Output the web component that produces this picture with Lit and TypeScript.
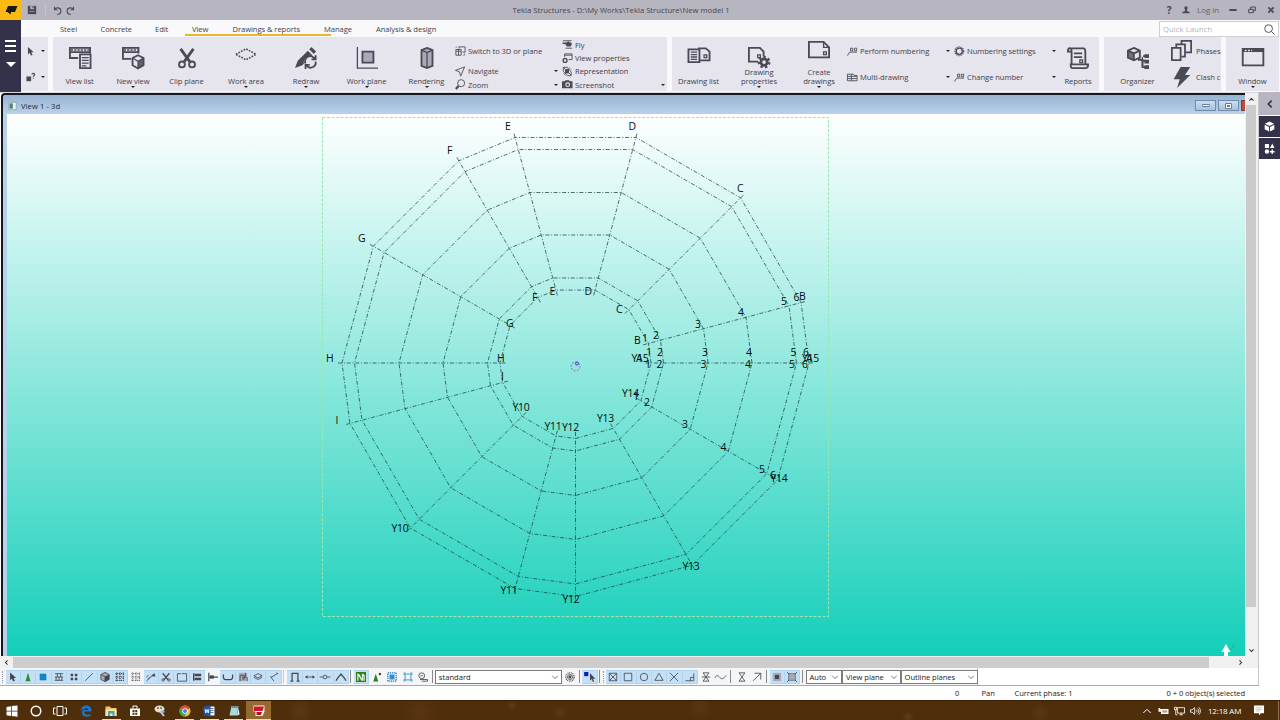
import { LitElement, html, svg, css, nothing } from "lit";
import { customElement, property } from "lit/decorators.js";
import { classMap } from "lit/directives/class-map.js";

// All glyphs share a 24x24 box. Strokes use currentColor.
const ICONS: Record<string, unknown> = {
  save: svg`<path class="f" d="M2 2h20v20H2z"/><path class="bg" d="M8 2h9v8H8z"/><path class="f" d="M13 3h3v5h-3z"/><path class="bg" d="M6 15h12v1.500H6z"/>`,
  undo: svg`<path class="s3" d="M4 2v8h8M4 9c4-6 17-6 17 4 0 6-4 9-10 9"/>`,
  redo: svg`<path class="s3" d="M20 2v8h-8M20 9C16 3 3 3 3 13c0 6 4 9 10 9"/>`,
  cursor: svg`<path class="f" d="M5 1v19l4.500-4 3 7 4-1.800-3-6.700h6z"/>`,
  query: svg`<path class="f" d="M1 10h12v12H1z"/><path class="s3" d="M15 5c0-4 7-4 7 0 0 3-3.500 2.500-3.500 6M18.500 13v2"/>`,
  viewList: svg`<path class="s2" d="M10 12H1V1h22v6M1 5.500h22"/><path class="s2 hdr" d="M2 3.200h20"/><path class="s2 fb" d="M12 8h11.500v15H12z"/><path class="s1" d="M14 11.500h7.500M14 14.500h7.500M14 17.500h7.500M14 20.500h5"/>`,
  newView: svg`<path class="s2" d="M10 13H1V1h17v6M1 5.500h17"/><path class="s2 hdr" d="M2 3.200h15"/><path class="s2 fb" d="M17.500 9l6 3v8l-6 3.500-6-3.500v-8z"/><path class="f" d="M17.500 15.500v8l6-3.500v-8z" opacity=".85"/><path class="s1" d="M11.500 12l6 3.500 6-3.500M17.500 15.500v8"/>`,
  clip: svg`<path class="s3" d="M5 2l10 14M19 2L9 16"/><circle class="s2" cx="6.500" cy="19" r="3.200"/><circle class="s2" cx="17.500" cy="19" r="3.200"/>`,
  workArea: svg`<path class="s1 dash" d="M1 8L12 2l11 6-11 6z"/>`,
  redraw: svg`<path class="f" d="M0 23l3-8L14 4l5 5L8 20z"/><path class="f" d="M15.500 2.500L18 0l5 5-2.500 2.500z"/><circle class="fb" cx="17" cy="17" r="7.500"/><path class="s2" d="M11.500 18a5.500 5.500 0 0 1 10-5M22.500 16a5.500 5.500 0 0 1-10 4M22.500 9v4.500H18M11.500 24v-4.500H16"/>`,
  workPlane: svg`<path class="s1" d="M1.500 0v23H24"/><path class="s2 mid" d="M7 5h12v12H7z"/>`,
  rendering: svg`<path class="s2 mid" d="M12 1l6 2.500v17L12 23l-6-2.500v-17z"/><path class="s1" d="M6 3.500L12 6l6-2.500M12 6v17"/>`,
  switch3d: svg`<path class="s2" d="M2 8h12v13H2zM2 12h12M8 8v13M9 6V2h14v12h-6"/><path class="s1" d="M1 5l4-4M18 21h4v-4"/>`,
  navigate: svg`<path class="s2" d="M22 2L1 10l9 3 3 10z"/>`,
  zoom: svg`<circle class="s2" cx="14" cy="9.500" r="8"/><path class="s4" d="M8 16l-6 7"/>`,
  fly: svg`<path class="s2" d="M2 4h20"/><path class="f" d="M1 8h9l4-3 9 5-3 7h-9l-3-5-7-1z"/><path class="s2" d="M8 21h15"/>`,
  viewProps: svg`<path class="s2" d="M6 9V2h17v13h-8M6 5h17"/><circle class="s3" cx="7" cy="17" r="4.500"/>`,
  representation: svg`<path class="s2" d="M3 3l18 18M3 3v9l9 10h9v-8L12 3z"/><path class="f" d="M7 7h9v10H7z"/><path class="s1" d="M3 16l5 6M16 3l6 6"/>`,
  screenshot: svg`<path class="f" d="M0 5h6l2-2h8l2 2h6v16H0z"/><circle class="fb" cx="13" cy="13" r="5.500"/><circle class="f" cx="13" cy="13" r="3"/>`,
  drawingList: svg`<path class="s2" d="M11 1.500h8.500l4 3.500v9.500H12"/><path class="s1" d="M17.500 8.500h3v3h-3z"/><path class="s2 fb" d="M.5 2.500h12v14H.5z"/><path class="s1" d="M3 5.500h7M3 8.200h7M3 10.900h7M3 13.600h7"/>`,
  drawingProps: svg`<path class="s2" d="M11 16H1V1h12l4 4v5"/><path class="s1" d="M10.500 8.500h3v3h-3z"/><circle class="s3" cx="17.500" cy="16.500" r="3.500"/><circle class="s3 cog" cx="17.500" cy="16.500" r="5.500"/>`,
  createDrawing: svg`<path class="s2" d="M1 2h16l6 6v11H1z"/><path class="s1" d="M17 2v6h6M17 13h3v3h-3z"/>`,
  perform: svg`<path class="s2" d="M1 22l5-8h17M8 5h5v6H8zM17 5h5v6h-5z"/>`,
  multi: svg`<path class="s2" d="M1 5h14l2 3h6v12H1zM1 10h21M1 15h21M10 5v15"/>`,
  gear: svg`<circle class="s3" cx="12" cy="12" r="7"/><circle class="s3 cog" cx="12" cy="12" r="10"/>`,
  reports: svg`<path class="s2" d="M5 19V5c0-5-4-5-4 0h3M3 1.500h15c2 0 2 2 2 4V19M8 19h15c0 3-1 4-3 4H6c-2 0-2-4-2-4h4"/><path class="s2" d="M7.500 7h9M7.500 11h9"/><path class="s1" d="M14 14h3v3h-3z"/>`,
  organizer: svg`<path class="s2 fb" d="M7.500 1l6.500 3v7.500l-6.500 3-6.500-3V4z"/><path class="f" d="M1 4l6.500 3v7.500L1 11.500z" opacity=".75"/><path class="s2" d="M1 4l6.500 3L14 4M7.500 7v7.500M12 14h5v9M17 15h3M17 22h3"/><path class="f" d="M19 8h5v4h-5zM19 14h5v4h-5zM19 20h5v4h-5zM16 9h3v2h-3zM16 9v13h1.500V9z"/>`,
  phases: svg`<path class="s2" d="M1 9h10v14H1z"/><path class="s2" d="M6 8V5h10v14h-4M12 4V1h11v13h-6"/>`,
  clash: svg`<path class="f" d="M11 0h11l-6 9h6L7 24l3-10H3z"/>`,
  window: svg`<path class="s2" d="M.8 2h22.500v18H.8z"/><path class="f" d="M.8 2h22.500v3.500H.8z"/><path class="d" d="M3 3.800h8"/>`,
  search: svg`<circle class="s2" cx="10" cy="10" r="8.500"/><path class="s2" d="M16 16l7 7"/>`,
  user: svg`<circle class="f" cx="12" cy="6" r="5"/><path class="f" d="M9 9h6v6l8 3v4H1v-4l8-3z"/>`,
  min: svg`<path class="f" d="M1 9h22v6H1z"/>`,
  restore: svg`<path class="s3" d="M2 10h14v10H2zM8 9V3h14v11h-5"/>`,
  close: svg`<path class="s4" d="M4 4l16 16M20 4L4 20"/>`,
  left: svg`<path class="s4" d="M17 2L7 12l10 10"/>`,
  right: svg`<path class="s4" d="M7 2l10 10L7 22"/>`,
  up: svg`<path class="s4" d="M2 17L12 7l10 10"/>`,
  down: svg`<path class="s4" d="M2 7l10 10L22 7"/>`,
  trayUp: svg`<path class="s3" d="M1 18L12 7l11 11"/>`,
  chev: svg`<path class="s3" d="M1 7l11 11L23 7"/>`,
  cube: svg`<path class="f" d="M12 1l10 5-10 5L2 6zM1.500 8l9.500 5v10l-9.500-5zM22.500 8L13 13v10l9.500-5z"/>`,
  parts: svg`<path class="f" d="M2 2h9v9H2zM18 1l5 10H13zM16.500 14h3v3.500h3.500v3h-3.500V24h-3v-3.500H13v-3h3.500z"/><circle class="f" cx="6.500" cy="18.500" r="4.800"/>`,
  // selection switches
  tri: svg`<path d="M12 2l6 20H6z" fill="#2e8b25"/>`,
  square: svg`<path d="M4 4h16v16H4z" fill="#1583c8"/>`,
  hatch: svg`<path class="s2" d="M2 4h20M2 12h20M2 20h20M8 4v8M16 4v8M5 12v8M12 12v8M19 12v8"/>`,
  dots: svg`<path class="f" d="M4 4h6v6H4zM14 4h6v6h-6zM4 14h6v6H4zM14 14h6v6h-6z"/>`,
  line: svg`<path class="s2" d="M3 21L21 3"/>`,
  solid: svg`<path class="mid s2" d="M12 1l10 5v12l-10 5-10-5V6z"/><path class="f" d="M12 11l10-5v12l-10 5z"/><path class="s2" d="M2 6l10 5v12"/>`,
  grid: svg`<path class="s3 gd" d="M1 4h22M1 12h22M1 20h22M4 1v22M12 1v22M20 1v22"/>`,
  gridO: svg`<path class="s2 gd" d="M1 4h22M1 12h22M1 20h22M4 1v22M12 1v22M20 1v22"/><circle cx="20" cy="12" r="2.500" fill="#d77b4a"/>`,
  weld: svg`<path class="s2" d="M1 22L20 4M1 12l5-4M4 17l5-4"/><path class="f" d="M12 10l8-7 3 8z"/>`,
  cut: svg`<path class="s3" d="M4 3l13 16M20 3L7 19"/><circle class="s2" cx="5" cy="19" r="3"/><circle class="s2" cx="19" cy="19" r="3"/>`,
  view: svg`<path class="s2" d="M1 4h9M1 4v18h22V4H12"/>`,
  fitting: svg`<path class="s3" d="M4 3v18"/><path class="f" d="M6 4h16v6H6zM6 14h16v6H6z"/>`,
  plane: svg`<path class="s3" d="M2 2v20M2 12h22"/><path class="f" d="M5 8h9v8H5z"/>`,
  rebar: svg`<path class="s3" d="M1 6v6c0 5 2 6 5 6h12c3 0 5-1 5-6V6"/>`,
  pour: svg`<path class="mid" d="M2 2h20v20H2z"/><path class="s2" d="M5 22V8h10v9h-5M10 13h8V2M22 22V12"/>`,
  layers: svg`<path class="s2" d="M12 4l10 5-10 5L2 9zM2 13l10 5 10-5"/>`,
  bend: svg`<path class="s2" d="M21 3L5 13l7 9M3 10l4 4M18 2l4 3"/>`,
  portal: svg`<path class="s3" d="M5 22V3h14v19M1 22h7M16 22h7"/>`,
  dist: svg`<path class="s2" d="M2 12h20"/><path class="f" d="M0 12l6-4v8zM24 12l-6-4v8z"/>`,
  node: svg`<path class="s2" d="M-1 12h8M17 12h8"/><circle class="s2" cx="12" cy="12" r="4.500"/>`,
  peak: svg`<path class="s3" d="M0 21l3-5L12 5l9 11 3 5"/>`,
  compo: svg`<path d="M0 0h24v24H0z" fill="#2f7d1e"/><path d="M3 21V3l6 3 5 11V4h3l4 4v13h-3V9h-1v12h-4L6 9v12z" fill="#e6f3d8"/>`,
  triDot: svg`<path d="M9 4l6 19H3z" fill="#2e7d22"/><circle class="f" cx="19" cy="5" r="3"/>`,
  asm: svg`<path d="M2 2h20v20H2z" fill="none" stroke="#1679c4" stroke-width="3" stroke-dasharray="3 2"/><path d="M6 6h12v12H6z" fill="#2b8fd6"/>`,
  asm2: svg`<path d="M5 5h14v14H5z" fill="none" stroke="#2b83c4" stroke-width="2"/><path d="M1 1h6v6H1zM17 1h6v6h-6zM1 17h6v6H1zM17 17h6v6h-6z" fill="#69b2e0"/>`,
  magnify: svg`<circle class="s2" cx="9" cy="9" r="7"/><path class="s2" d="M6 9h6M5 18h18v4H9"/>`,
  target: svg`<circle class="s3" cx="12" cy="12" r="10" stroke-dasharray="2 2"/><circle class="s2" cx="12" cy="12" r="6"/><circle class="f" cx="12" cy="12" r="3.500"/>`,
  pick: svg`<path d="M-2 0h10v10h-10z" fill="#0b1fae"/><path class="f" d="M12 3v18l4-4 3 7 3-1.500-3-6.500h6z"/>`,
  snapX: svg`<path class="s2" d="M3 3h18v18H3zM3 3l18 18M21 3L3 21"/>`,
  snapSq: svg`<path class="s2" d="M3 3h18v18H3z"/>`,
  snapO: svg`<circle class="s2" cx="12" cy="12" r="9"/>`,
  snapTri: svg`<path class="s2" d="M12 3l10 17H2z"/>`,
  snapCross: svg`<path class="s2" d="M2 2l20 20M22 2L2 22"/>`,
  snapPerp: svg`<path class="s2" d="M1 21h20V3M13 21v-8h8"/>`,
  hour: svg`<path class="s2" d="M5 2h14L5 22h14L5 2M2 12h20"/>`,
  wave: svg`<path class="s2" d="M-2 14c4-10 8-4 12 0s8 3 14-6"/>`,
  hour2: svg`<path class="s2" d="M5 2h14L5 22h14L5 2"/>`,
  arrowNE: svg`<path class="s2" d="M3 21L21 3M6 3h15v15"/>`,
  fillSq: svg`<path class="mid" d="M2 2h20v20H2z"/><path class="f" d="M7 7h10v10H7z"/>`,
  fillCross: svg`<path class="mid s1" d="M4 4h16v16H4z"/><path class="s2" d="M0 0l5 5M24 0l-5 5M0 24l5-5M24 24l-5-5"/>`,
  // taskbar
  win: svg`<path class="f" d="M1 4l9-1.500v9H1zM11.500 2.200L23 .8v10.700H11.500zM1 13h9v8.800L1 20.500zM11.500 13H23v10.500l-11.500-1.600z"/>`,
  cortana: svg`<circle class="s3" cx="12" cy="12" r="9.500"/>`,
  task: svg`<path class="s2" d="M6 3h12v18H6zM3 6h-4v12h4M21 6h4v12h-4"/>`,
  edge: svg`<path d="M1 12C2 4 7 1 13 1c7 0 10 5 10 12H8c0 7 8 8 13 5v4c-7 3-17 2-17-7 0-5 4-7 7-8-5 0-8 2-10 5zM8.500 10h8c0-5-7-5-8 0z" fill="#1d76c9" fill-rule="evenodd"/>`,
  folder: svg`<path d="M1 3h9l2 3h11v16H1z" fill="#f3c757"/><path d="M1 9h22v13H1z" fill="#fbe7a1"/><path d="M6 12h13v10h-4v-5h-5v5H6z" fill="#3aa6cf"/>`,
  store: svg`<path class="f" d="M2 7h20v15H2z"/><path class="s2" d="M8 7V2h8v5"/><path d="M7 10h4v4H7zM12.500 10h4v4h-4zM7 15.500h4v4H7zM12.500 15.500h4v4h-4z" fill="#4a2b0c"/>`,
  paint: svg`<ellipse cx="11" cy="8" rx="10" ry="7" fill="#e6ddd4"/><circle cx="8" cy="6" r="2" fill="#c2432d"/><circle cx="14" cy="6" r="2" fill="#31885b"/><path d="M12 12l8 10" stroke="#c9d0d8" stroke-width="4"/><circle cx="18" cy="13" r="3" fill="#98a9c4"/>`,
  chrome: svg`<circle cx="12" cy="12" r="11" fill="#f2c230"/><path d="M12 12L2.500 6.500A11 11 0 0 1 21.500 6.500z" fill="#dd4b38"/><path d="M2.500 6.500A11 11 0 0 0 11 23l4-8-3-3z" fill="#3fa457"/><circle cx="12" cy="12" r="5.500" fill="#fff"/><circle cx="12" cy="12" r="4" fill="#3e80df"/>`,
  word: svg`<path d="M12 3h11v18H12z" fill="#f3f6fb"/><path d="M14 7h7M14 11h7M14 15h7" stroke="#2b5aa6" stroke-width="1.500"/><path d="M1 3l14-2v22L1 21z" fill="#1f54a6"/><path d="M4 8l1.500 8L8 9l2.500 7L12 8" fill="none" stroke="#fff" stroke-width="1.800"/>`,
  notes: svg`<path d="M7 2h14l-3 19H3z" fill="#a9d8da"/><path d="M8 2h13l-1 4H7z" fill="#6b8f95"/><path d="M18 21l3-15 2 13z" fill="#dff0f0"/>`,
  tekla: svg`<path d="M1 1h22v12l-4 9H5V13H1z" fill="#f7eeee"/><path d="M2 3h20l-3 9H2z" fill="#d2132b"/><path d="M7 14h11l-2 6H7z" fill="#b8102a"/>`,
  battery: svg`<path class="f" d="M4 7h20v12H6v-5H0V5h4z"/><path class="dark" d="M9 10h12v6H9z" opacity=".4"/>`,
  net: svg`<path class="s2" d="M7 4h17v13H7zM12 21h8M16 17v4"/><path class="s2" d="M0 3h5v6H0zM3 9v12h4"/>`,
  sound: svg`<path class="s2" d="M0 9h4l6-5v16l-6-5H0zM14 9c2 2 2 4 0 6M17 6c4 4 4 8 0 12M20 3c5 6 5 12 0 18"/>`,
  notif: svg`<path class="f" d="M1 1h22v17h-7l-4 5v-5H1z"/><path d="M5 6h14M5 9.500h14M5 13h9" stroke="#b9a48f" stroke-width="1.300"/>`,
  app: svg`<path d="M1 1h22v22H1z" fill="#f5f8fa" stroke="#8294a5" stroke-width="2"/><path d="M3 4h10v16H3z" fill="#4d8576"/><path d="M15 4h5v16h-5z" fill="#dcebe8"/>`,
  logo: svg`<path d="M6 4h19l-5 12h-8l-1 5-6-5H1z" fill="#1b1a12"/>`,
};

@customElement("tk-icon")
export class TkIcon extends LitElement {
  static styles = css`
    :host { display: inline-flex; flex: none; width: 24px; height: 24px; }
    svg { display: block; width: 100%; height: 100%; overflow: visible; }
    .f { fill: currentColor; }
    .bg { fill: #b7b6c0; }
    .dark { fill: #3d2309; }
    .s1, .s2, .s3, .s4 { fill: none; stroke: currentColor; stroke-width: 1.4; }
    .s2 { stroke-width: 2; }
    .s3 { stroke-width: 3; }
    .s4 { stroke-width: 5; }
    .hdr { stroke-width: 2.4; stroke-dasharray: 2.4 1.2; opacity: 0.75; }
    .fb { fill: #e6e5ed; }
    .mid { fill: #a9a9b8; }
    .d { stroke: #e6e5ed; stroke-width: 1.4; stroke-dasharray: 2 1.5; }
    .dash { stroke-width: 1.8; stroke-dasharray: 1.8 1.4; }
    .cog { stroke-dasharray: 2.5 2.4; }
    .gd { stroke-dasharray: 2.4 2; }
  `;

  @property() name = "";

  render() {
    return html`<svg viewBox="0 0 24 24">${ICONS[this.name] ?? nothing}</svg>`;
  }
}

const CX = 575.5;
const CY = 363;
const RINGS = [75.5, 88, 132.5, 176.5, 221, 233.5];
const ANGLES = [0, 15, 45, 75, 105, 120, 150, 180, 195, 225, 255, 270, 300, 330];

const polar = (r: number, deg: number) => {
  const a = (deg * Math.PI) / 180;
  return [CX + r * Math.cos(a), CY - r * Math.sin(a)];
};

// [text, x, baseline]
const GRID_LABELS: [string, number, number][] = [
  ["E", 505, 130], ["D", 628.5, 130], ["C", 737, 192], ["B", 799, 300],
  ["F", 447, 154], ["G", 358, 242], ["H", 326, 362], ["I", 335.5, 424],
  ["Y10", 391.5, 532], ["Y11", 500.5, 594], ["Y12", 562.5, 603], ["Y13", 682.5, 570],
  ["Y14", 770.5, 482], ["Y15", 802, 362], ["A", 806, 362],
  ["E", 549.5, 295], ["D", 584.5, 295], ["C", 616, 313], ["B", 634, 344],
  ["F", 532, 301], ["G", 506, 327], ["H", 497, 362], ["I", 501, 380],
  ["Y10", 512.5, 411], ["Y11", 544.5, 430], ["Y12", 562, 431],
  ["Y13", 597, 422], ["Y14", 622, 397], ["Y15", 631.5, 362], ["A", 636, 362],
  ["1", 642, 342], ["2", 653, 339], ["3", 695, 328], ["4", 738, 316], ["5", 781, 305], ["6", 793.5, 301],
  ["1", 646, 356], ["2", 657, 356], ["3", 702, 356], ["4", 746, 356], ["5", 790.5, 356], ["6", 803, 356],
  ["1", 645, 368], ["2", 656.5, 368], ["3", 700.5, 368], ["4", 745, 368], ["5", 789, 368], ["6", 802, 368],
  ["1", 633, 400], ["2", 644, 406], ["3", 682, 428], ["4", 720.5, 451], ["5", 759, 473], ["6", 770, 479],
];

@customElement("model-view")
export class ModelView extends LitElement {
  static styles = css`
    :host { display: block; background: linear-gradient(#fff, #13cfb9); }
    svg { display: block; width: 100%; height: 100%; }
    .grid { fill: none; stroke: #1b4340; stroke-width: 0.75; stroke-dasharray: 4 1.8 1 1.8; }
    .bounds { fill: none; stroke: #98e8ae; stroke-width: 1; stroke-dasharray: 3 1.5; }
    .origin { fill: #b9c9ee; fill-opacity: 0.4; stroke: #6a6fd0; stroke-width: 0.9; stroke-dasharray: 2 1.4; }
    .pivot { fill: none; stroke: #2a2fb8; stroke-width: 0.9; }
    .axis { fill: #fff; }
    .tip { stroke: #0fc48f; stroke-width: 1; fill: none; }
    text { font: 10.4px "Open Sans", "Noto Sans", sans-serif; letter-spacing: -0.3px; fill: #050b0a; }
  `;

  render() {
    return html`
      <svg viewBox="7 114 1238 542" preserveAspectRatio="none">
        <rect class="bounds" x="322.5" y="117.5" width="506" height="499" />
        ${RINGS.map(
          (r) => svg`<polygon class="grid" points=${ANGLES.map((a) => polar(r, a).join(",")).join(" ")} />`
        )}
        ${ANGLES.map((a) => {
          const [x1, y1] = polar(a === 270 ? 69 : 70, a);
          const [x2, y2] = polar(239, a);
          return svg`<line class="grid" x1=${x1} y1=${y1} x2=${x2} y2=${y2} />`;
        })}
        ${GRID_LABELS.map(([t, x, y]) => svg`<text x=${x} y=${y}>${t}</text>`)}
        <circle class="origin" cx="575.5" cy="366.5" r="4.5" />
        <circle class="pivot" cx="577" cy="363.5" r="1.5" />
        <path class="axis" d="M1226 644l4.500 8h-2.500v4h-4v-4h-2.500z" />
        <path class="tip" d="M1230 650l6-7M1232 644l3 5" />
      </svg>
    `;
  }
}

const TABS: [string, number][] = [
  ["Steel", 60], ["Concrete", 100.5], ["Edit", 155], ["View", 192],
  ["Drawings & reports", 232.5], ["Manage", 324], ["Analysis & design", 376],
];

interface Big { icon: string; lines: string[]; w: number; drop?: boolean; tall?: boolean }
interface Small { icon: string; text: string; drop?: boolean }

const VIEW_BIG: Big[] = [
  { icon: "viewList", lines: ["View list"], w: 53 },
  { icon: "newView", lines: ["New view"], w: 54, drop: true },
  { icon: "clip", lines: ["Clip plane"], w: 53 },
  { icon: "workArea", lines: ["Work area"], w: 66, drop: true },
  { icon: "redraw", lines: ["Redraw"], w: 54, drop: true },
  { icon: "workPlane", lines: ["Work plane"], w: 67, drop: true },
  { icon: "rendering", lines: ["Rendering"], w: 53, drop: true },
];

const VIEW_A: Small[] = [
  { icon: "switch3d", text: "Switch to 3D or plane" },
  { icon: "navigate", text: "Navigate", drop: true },
  { icon: "zoom", text: "Zoom", drop: true },
];

const VIEW_B: Small[] = [
  { icon: "fly", text: "Fly" },
  { icon: "viewProps", text: "View properties" },
  { icon: "representation", text: "Representation" },
  { icon: "screenshot", text: "Screenshot", drop: true },
];

const DRAW_BIG: Big[] = [
  { icon: "drawingList", lines: ["Drawing list"], w: 53 },
  { icon: "drawingProps", lines: ["Drawing", "properties"], w: 68, drop: true },
  { icon: "createDrawing", lines: ["Create", "drawings"], w: 52, drop: true, tall: true },
];

const SELECT_A = "cursor tri square hatch dots line solid grid".split(" ");
const SELECT_B = "weld cut view fitting".split(" ");
const SELECT_C = "rebar pour layers bend".split(" ");
const SELECT_D = "portal dist node peak".split(" ");
const SNAPS = "snapX snapSq snapO snapTri snapCross snapPerp".split(" ");

const TASKS: [string, number, string?][] = [
  ["win", 24], ["cortana", 24], ["task", 24], ["edge", 27], ["folder", 24, "open"], ["store", 24],
  ["paint", 25], ["chrome", 25, "open"], ["word", 24, "open"], ["notes", 25, "open"], ["tekla", 25, "open active"],
];

@customElement("app-root")
export class AppRoot extends LitElement {
  static styles = css`
    :host {
      display: flex;
      flex-direction: column;
      width: 1280px;
      height: 720px;
      overflow: hidden;
      background: #fff;
      color: #3f3e4a;
      font: 7.6px/10px "Open Sans", "Noto Sans", sans-serif;
      letter-spacing: -0.06px;
      white-space: nowrap;
    }
    * { box-sizing: border-box; }
    tk-icon { color: #4a4956; }
    .row { display: flex; align-items: center; }

    .title { display: flex; align-items: center; height: 20px; flex: none; background: #b7b6c0; color: #45444f; }
    .logo { display: flex; align-items: center; justify-content: center; width: 21.5px; height: 20px; background: #fdb913; }
    .logo tk-icon { width: 12px; height: 12px; }
    .save { width: 10px; height: 10px; margin-left: 5px; }
    .title .bar { width: 1px; height: 12px; margin: 0 7px 0 8px; background: #c5c4cd; }
    .title .hist { width: 9px; height: 9px; margin-right: 4.5px; }
    .caption { width: 300px; text-align: center; margin-left: 391.5px; font-size: 7.7px; letter-spacing: 0; }
    .winbtns { display: flex; align-items: center; margin-left: auto; padding-right: 5px; }
    .winbtns tk-icon { width: 8px; height: 8px; }
    .help { font-weight: 700; font-size: 10px; margin-right: 10.5px; }
    .login { margin: 0 10px 0 7px; color: #62616c; font-size: 8px; }
    .winbtns .gap { margin-right: 11px; }

    .head { display: flex; height: 72px; flex: none; }
    .app-menu { display: flex; flex-direction: column; align-items: center; width: 21px; background: #33324a; padding-top: 20px; }
    .app-menu i { width: 11px; height: 2px; margin-bottom: 3px; background: #fff; }
    .app-menu b { margin-top: 7px; border: 5px solid transparent; border-top-color: #fff; border-bottom: 0; }
    .head-main { flex: 1; display: flex; flex-direction: column; min-width: 0; background: #f9f9fb; }
    .tabs { display: flex; height: 18px; align-items: center; position: relative; }
    .tab { position: absolute; top: 4px; }
    .underline { position: absolute; left: 164px; top: 14px; width: 146px; height: 2px; background: #e9b62f; }
    .quick {
      display: flex; align-items: center; justify-content: space-between;
      width: 120px; height: 16px; margin: 1px 1px 0 auto; padding: 0 3px 0 3px;
      background: #fff; border: 1px solid #cfced6; color: #b2b1bb; letter-spacing: 0.12px;
    }
    .quick tk-icon { width: 11px; height: 11px; }

    .ribbon { display: flex; flex: 1; gap: 5px; padding: 0 1px 1px 0; }
    .group { display: flex; flex: none; background: #e6e5ed; overflow: hidden; }
    .pickers { flex-direction: column; width: 27px; padding-top: 0.5px; }
    .pickers .row { height: 26.5px; padding-left: 5px; gap: 5.5px; }
    .pickers tk-icon { width: 9.5px; height: 10.5px; }
    .arrow { flex: none; width: 0; height: 0; border: 2px solid transparent; border-top-color: #222; border-bottom: 0; }
    .big { display: flex; flex: none; flex-direction: column; align-items: center; height: 53px; padding-top: 10.4px; }
    .big tk-icon { width: 22px; height: 22px; }
    .big .lbl { display: flex; flex-direction: column; justify-content: flex-end; align-items: center; height: 16.4px; line-height: 9px; }
    .big.tall { padding-top: 3.4px; }
    .big.tall .lbl { height: 23.4px; }
    .big .arrow { margin-top: 0; }
    .col { display: flex; flex: none; flex-direction: column; padding-top: 1px; }
    .col .row { height: 13.3px; padding: 0 2.5px 0 2px; gap: 2.5px; }
    .col .row tk-icon { width: 10.5px; height: 10.5px; }
    .col .row .arrow { margin-left: auto; }
    .col .row:first-child.high { height: 26.6px; }
    .half, .phases { padding-top: 0.5px; }
    .half .row { height: 26.5px; }
    .phases .row { height: 26.5px; padding-left: 0; gap: 4px; }
    .phases .row tk-icon { width: 21px; height: 21px; }

    .work { display: flex; height: 576px; flex: none; }
    .frame { display: flex; flex-direction: column; width: 1259px; border-right: 1px solid #c9c9cf; background: #f0f0f0; }
    .mdi { display: flex; height: 564px; border-top: 1px solid #d8d8e0; background: #fff; }
    .win { display: flex; flex: none; flex-direction: column; width: 1244px; margin-left: 1px; border: 2px solid #15191f; border-width: 2px 0 0 2px; border-radius: 4px 0 0 0; background: #b8d0ea; }
    .win-title {
      display: flex; align-items: center; height: 19px; flex: none; padding: 3px 0 0 5px; gap: 4px;
      background: linear-gradient(#98b4d2, #b9d1ea); border-radius: 3px 0 0 0; color: #1d2733; letter-spacing: 0.08px;
    }
    .win-title tk-icon { width: 9px; height: 8px; }
    .caps { display: flex; align-self: flex-start; margin: 2px 0 0 auto; gap: 2px; }
    .caps i { display: flex; align-items: center; justify-content: center; width: 21px; height: 11px; border: 1px solid #6d8cae; background: linear-gradient(#cfdef0, #a5c1e0); }
    .caps i.x { width: 4px; border-color: #7b3a3a; border-right: 0; background: #c44a38; }
    .caps i span { width: 8px; height: 3px; border: 1px solid #6a7b90; border-radius: 1px; background: #fff; }
    .caps i span.sq { width: 7px; height: 6px; border-width: 1px; box-shadow: inset 0 0 0 1px #fff; background: #6a7b90; }
    .win model-view { flex: none; width: 1238px; height: 542px; margin-left: 4px; }
    .vbar { display: flex; flex-direction: column; align-items: center; width: 13px; padding-right: 1px; background: #f0f0f0; border-top: 1px solid #f0f0f0; }
    .vbar tk-icon, .hbar tk-icon { width: 5px; height: 5px; color: #333; }
    .vbar tk-icon { margin: 3px 0 3px; }
    .vbar .thumb { width: 10px; height: 502px; background: #cbcbcb; }
    .vbar .last { margin-top: auto; margin-bottom: 3px; }
    .hbar { display: flex; align-items: center; height: 12px; width: 1257px; padding: 0 14px 0 4px; }
    .hbar .thumb { flex: none; width: 1196px; height: 11px; margin-left: 4px; background: #cdcdcd; }
    .hbar .last { margin-left: auto; }
    .side { display: flex; flex-direction: column; width: 21px; gap: 1px; background: #fff; }
    .side div { display: flex; align-items: center; justify-content: center; height: 21px; background: #33324a; }
    .side div:first-child { height: 23px; background: #b7b6c0; }
    .side tk-icon { width: 11px; height: 11px; color: #fff; }
    .side div:first-child tk-icon { width: 8px; height: 8px; color: #333244; }

    .tools { display: flex; align-items: center; width: 1259px; height: 18px; flex: none; border-bottom: 1px solid #a8a8a8; border-right: 1px solid #c9c9cf; background: #fff; }
    .strip { display: flex; align-items: center; height: 17px; width: 978px; padding-left: 2px; background: #f4f5f6; border-right: 1px solid #c8c8c8; }
    .grip { width: 1px; height: 12px; margin-right: 2px; border-left: 1px dotted #999; }
    .strip > .grip:first-child { margin-right: 2.6px; }
    .tb { display: flex; align-items: center; justify-content: center; flex: none; width: 15.35px; height: 14px; }
    .tb.on { background: #c4e0f7; border: 1px solid #b0d3ef; border-width: 1px 1px 1px 0; }
    .tb tk-icon { width: 10px; height: 10px; color: #45444f; }
    .sep { flex: none; width: 5.2px; height: 13px; border-left: 1px solid #8a8a8a; margin-left: 1.6px; margin-right: -1.6px; }
    .sep.light { border-color: #ccc; margin-right: -1.1px; }
    .select { display: flex; align-items: center; justify-content: space-between; flex: none; height: 14px; padding: 0 3px; border: 1px solid #7d7d7d; background: #fff; color: #1a1a1a; }
    .select tk-icon { width: 6px; height: 6px; }
    .std { width: 127px; margin-left: -1.1px; letter-spacing: 0; }
    .auto { width: 36.5px; }
    .vp { width: 58.5px; }
    .op { width: 77px; }

    .status { display: flex; align-items: center; height: 14px; flex: none; color: #1a1a1a; padding-left: 955px; }
    .status .s0 { width: 26.5px; }
    .status .s1 { width: 33px; }
    .status .s2 { width: 152px; }

    .taskbar {
      display: flex; height: 20px; flex: none; color: #fff; border-top: 1px solid #3c2006;
      background:
        radial-gradient(circle 5px at 512px 5px, #5f3c15, transparent),
        radial-gradient(circle 8px at 560px 12px, #5b3812, transparent),
        radial-gradient(circle 6px at 908px 16px, #603e16, transparent),
        radial-gradient(circle 14px at 300px 10px, #5b3914, transparent),
        radial-gradient(circle 18px at 420px 12px, #593611, transparent),
        radial-gradient(circle 12px at 700px 6px, #593611, transparent),
        radial-gradient(circle 10px at 1040px 12px, #5c3913, transparent),
        #4f2e0c;
    }
    .task { display: flex; align-items: center; justify-content: center; }
    .task tk-icon { width: 12px; height: 12px; color: #fff; }
    .task.open { background: linear-gradient(#efd9b6, #efd9b6) center bottom / 19px 1.5px no-repeat; }
    .task.active { background: linear-gradient(#efd9b6, #efd9b6) center bottom / 100% 1.5px no-repeat #95692f; }
    .tray { display: flex; align-items: center; margin-left: auto; padding-right: 13.5px; }
    .tray tk-icon { width: 11px; height: 10px; margin-right: 5px; color: #fff; }
    .tray .tiny { width: 8px; height: 8px; margin-right: 7px; }
    .clock { width: 33px; margin: 0 11.5px 0 2px; font-size: 8px; letter-spacing: -0.2px; }
    .tray .notif { width: 12px; height: 11px; margin: 0; }
    .peek { width: 2px; border-left: 1px solid #8b7150; }
  `;

  render() {
    return html`
      ${this.renderTitle()}
      <div class="head">
        <div class="app-menu"><i></i><i></i><i></i><b></b></div>
        <div class="head-main">
          <div class="tabs">
            ${TABS.map(([t, x]) => html`<span class="tab" style="left:${x - 21}px">${t}</span>`)}
            <span class="underline"></span>
            <div class="quick"><span>Quick Launch</span><tk-icon name="search"></tk-icon></div>
          </div>
          ${this.renderRibbon()}
        </div>
      </div>
      ${this.renderWorkspace()} ${this.renderTools()}
      <div class="status">
        <span class="s0">0</span><span class="s1">Pan</span>
        <span class="s2">Current phase: 1</span><span>0 + 0 object(s) selected</span>
      </div>
      ${this.renderTaskbar()}
    `;
  }

  renderTitle() {
    return html`
      <div class="title">
        <div class="logo"><tk-icon name="logo"></tk-icon></div>
        <tk-icon class="save" name="save"></tk-icon>
        <span class="bar"></span>
        <tk-icon class="hist" name="undo"></tk-icon>
        <tk-icon class="hist" name="redo"></tk-icon>
        <span class="caption">Tekla Structures - D:\\My Works\\Tekla Structure\\New model 1</span>
        <div class="winbtns">
          <span class="help">?</span>
          <tk-icon name="user"></tk-icon><span class="login">Log in</span>
          <tk-icon class="gap" name="min"></tk-icon>
          <tk-icon class="gap" name="restore"></tk-icon>
          <tk-icon name="close"></tk-icon>
        </div>
      </div>
    `;
  }

  big(b: Big) {
    return html`
      <div class=${classMap({ big: true, tall: !!b.tall })} style="width:${b.w}px">
        <tk-icon name=${b.icon}></tk-icon>
        <span class="lbl">${b.lines.map((l) => html`<span>${l}</span>`)}</span>
        ${b.drop ? html`<span class="arrow"></span>` : nothing}
      </div>
    `;
  }

  small(s: Small, high = false) {
    return html`
      <div class=${classMap({ row: true, high })}>
        <tk-icon name=${s.icon}></tk-icon><span>${s.text}</span>
        ${s.drop ? html`<span class="arrow"></span>` : nothing}
      </div>
    `;
  }

  renderRibbon() {
    return html`
      <div class="ribbon">
        <div class="group pickers">
          <div class="row"><tk-icon name="cursor"></tk-icon><span class="arrow"></span></div>
          <div class="row"><tk-icon name="query"></tk-icon><span class="arrow"></span></div>
        </div>
        <div class="group" style="width:614px">
          ${VIEW_BIG.map((b) => this.big(b))}
          <div class="col" style="width:107px">${VIEW_A.map((s, i) => this.small(s, i === 0))}</div>
          <div class="col" style="width:107px">${VIEW_B.map((s) => this.small(s))}</div>
        </div>
        <div class="group" style="width:427px">
          ${DRAW_BIG.map((b) => this.big(b))}
          <div class="col half" style="width:107px">
            ${this.small({ icon: "perform", text: "Perform numbering", drop: true })}
            ${this.small({ icon: "multi", text: "Multi-drawing", drop: true })}
          </div>
          <div class="col half" style="width:106px">
            ${this.small({ icon: "gear", text: "Numbering settings", drop: true })}
            ${this.small({ icon: "perform", text: "Change number", drop: true })}
          </div>
          ${this.big({ icon: "reports", lines: ["Reports"], w: 40 })}
        </div>
        <div class="group" style="width:117px">
          ${this.big({ icon: "organizer", lines: ["Organizer"], w: 67 })}
          <div class="col phases">
            ${this.small({ icon: "phases", text: "Phases" })}
            ${this.small({ icon: "clash", text: "Clash c" })}
          </div>
        </div>
        <div class="group">${this.big({ icon: "window", lines: ["Window"], w: 53, drop: true })}</div>
      </div>
    `;
  }

  renderWorkspace() {
    return html`
      <div class="work">
        <div class="frame">
          <div class="mdi">
            <div class="win">
              <div class="win-title">
                <tk-icon name="app"></tk-icon><span>View 1 - 3d</span>
                <div class="caps">
                  <i><span></span></i><i><span class="sq"></span></i><i class="x"></i>
                </div>
              </div>
              <model-view></model-view>
            </div>
            <div class="vbar">
              <tk-icon name="up"></tk-icon>
              <span class="thumb"></span>
              <tk-icon class="last" name="down"></tk-icon>
            </div>
          </div>
          <div class="hbar">
            <tk-icon name="left"></tk-icon>
            <span class="thumb"></span>
            <tk-icon class="last" name="right"></tk-icon>
          </div>
        </div>
        <div class="side">
          <div><tk-icon name="left"></tk-icon></div>
          <div><tk-icon name="cube"></tk-icon></div>
          <div><tk-icon name="parts"></tk-icon></div>
        </div>
      </div>
    `;
  }

  tool(name: string, on = true) {
    return html`<span class=${classMap({ tb: true, on })}><tk-icon name=${name}></tk-icon></span>`;
  }

  renderTools() {
    return html`
      <div class="tools">
        <div class="strip">
          <span class="grip"></span>
          ${SELECT_A.map((n) => this.tool(n))} ${this.tool("gridO", false)}
          ${SELECT_B.map((n) => this.tool(n))} ${this.tool("plane", false)}
          ${SELECT_C.map((n) => this.tool(n))}
          <span class="sep light"></span>
          ${SELECT_D.map((n) => this.tool(n))}
          <span class="sep"></span>
          ${this.tool("compo")} ${["triDot", "asm", "asm2", "magnify"].map((n) => this.tool(n, false))}
          <span class="sep"></span>
          <span class="select std">standard<tk-icon name="chev"></tk-icon></span>
          ${this.tool("target", false)}
          <span class="sep"></span>
          ${this.tool("pick")}
          <span class="sep"></span><span class="grip"></span>
          ${SNAPS.map((n) => this.tool(n))} ${this.tool("hour", false)} ${this.tool("wave", false)}
          <span class="sep"></span>
          ${this.tool("hour2", false)} ${this.tool("arrowNE", false)}
          <span class="sep"></span>
          ${this.tool("fillSq")} ${this.tool("fillCross")}
          <span class="sep"></span>
          <span class="select auto">Auto<tk-icon name="chev"></tk-icon></span>
          <span class="select vp">View plane<tk-icon name="chev"></tk-icon></span>
          <span class="select op">Outline planes<tk-icon name="chev"></tk-icon></span>
        </div>
      </div>
    `;
  }

  renderTaskbar() {
    return html`
      <div class="taskbar">
        ${TASKS.map(
          ([n, w, c]) => html`<div class="task ${c ?? ""}" style="width:${w}px"><tk-icon name=${n}></tk-icon></div>`
        )}
        <div class="tray">
          <tk-icon class="tiny" name="trayUp"></tk-icon>
          <tk-icon name="battery"></tk-icon>
          <tk-icon name="net"></tk-icon>
          <tk-icon name="sound"></tk-icon>
          <span class="clock">12:18 AM</span>
          <tk-icon class="notif" name="notif"></tk-icon>
        </div>
        <span class="peek"></span>
      </div>
    `;
  }
}
